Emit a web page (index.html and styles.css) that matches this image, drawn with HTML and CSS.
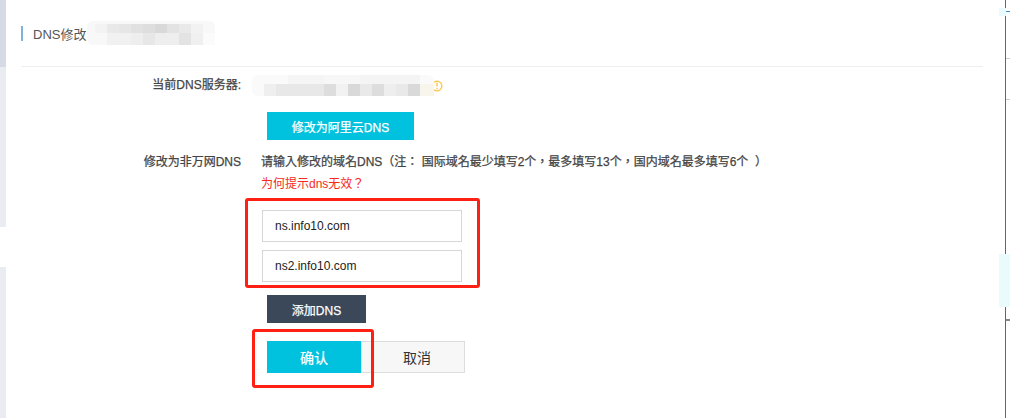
FILE: index.html
```html
<!DOCTYPE html>
<html lang="zh-CN">
<head>
    <meta charset="UTF-8">
    <title>DNS修改</title>
    <link rel="stylesheet" href="styles.css">
</head>
<body>
    <div class="page">
        <aside class="sidebar">
            <div class="side-top"></div>
            <div class="side-mid"></div>
            <div class="side-gap"></div>
            <div class="side-bottom"></div>
        </aside>

        <main class="content">
            <div class="title-bar">
                <h2 class="title">DNS修改</h2>
                <svg class="mosaic" width="128" height="24" viewBox="0 0 128 24">
                    <rect x="0" y="0" width="128" height="24" rx="6" fill="#f8f8f8"/>
                    <rect x="8" y="3" width="12" height="9" fill="#f3f3f3"/>
                    <rect x="20" y="3" width="12" height="9" fill="#e9e9e9"/>
                    <rect x="32" y="3" width="12" height="9" fill="#e6e6e6"/>
                    <rect x="44" y="3" width="12" height="9" fill="#e1e1e1"/>
                    <rect x="56" y="3" width="12" height="9" fill="#dedede"/>
                    <rect x="68" y="3" width="12" height="9" fill="#d9d9d9"/>
                    <rect x="80" y="3" width="12" height="9" fill="#e3e3e3"/>
                    <rect x="92" y="3" width="12" height="9" fill="#e9e9e9"/>
                    <rect x="104" y="3" width="12" height="9" fill="#f2f2f2"/>
                    <rect x="20" y="12" width="12" height="12" fill="#f1f1f1"/>
                    <rect x="32" y="12" width="12" height="12" fill="#f1f1f1"/>
                    <rect x="44" y="12" width="12" height="12" fill="#eeeeee"/>
                    <rect x="56" y="12" width="12" height="12" fill="#e7e7e7"/>
                    <rect x="68" y="12" width="12" height="12" fill="#eeeeee"/>
                    <rect x="80" y="12" width="12" height="12" fill="#eeeeee"/>
                    <rect x="92" y="12" width="12" height="12" fill="#e3e3e3"/>
                    <rect x="104" y="12" width="12" height="12" fill="#f0f0f0"/>
                    <rect x="116" y="12" width="12" height="12" fill="#fbfbfb"/>
                </svg>
            </div>

            <div class="form-row row-current">
                <label class="form-label">当前DNS服务器:</label>
                <div class="current-value">
                    <svg class="mosaic" width="182" height="21" viewBox="0 0 182 21">
                        <rect x="0" y="0" width="182" height="21" rx="6" fill="#fafafa"/>
                        <rect x="36" y="0" width="36" height="9" fill="#f5f5f5"/>
                        <rect x="72" y="0" width="36" height="9" fill="#f7f7f7"/>
                        <rect x="108" y="0" width="60" height="9" fill="#f4f4f4"/>
                        <rect x="12" y="9" width="12" height="12" fill="#efefef"/>
                        <rect x="24" y="9" width="48" height="12" fill="#e8e8e8"/>
                        <rect x="72" y="9" width="12" height="12" fill="#dddddd"/>
                        <rect x="84" y="9" width="12" height="12" fill="#f2f2f2"/>
                        <rect x="96" y="9" width="12" height="12" fill="#d9d9d9"/>
                        <rect x="108" y="9" width="12" height="12" fill="#e9e9e9"/>
                        <rect x="120" y="9" width="12" height="12" fill="#dddddd"/>
                        <rect x="132" y="9" width="12" height="12" fill="#eeeeee"/>
                        <rect x="144" y="9" width="12" height="12" fill="#e9e9e9"/>
                        <rect x="156" y="9" width="12" height="12" fill="#d9d9d9"/>
                        <rect x="168" y="9" width="14" height="12" fill="#f8f5ec"/>
                    </svg>
                    <svg class="tip-icon" width="12" height="12" viewBox="0 0 12 12">
                        <circle cx="6" cy="6" r="4.8" fill="none" stroke="#fcc858" stroke-width="1.5"/>
                        <path d="M6 2.8v3.8M6 7.8v1.3" stroke="#fcc858" stroke-width="1.5"/>
                    </svg>
                </div>
            </div>

            <div class="form-row row-aliyun">
                <div></div>
                <div><button class="btn btn-primary btn-aliyun">修改为阿里云DNS</button></div>
            </div>

            <div class="form-row row-custom">
                <label class="form-label">修改为非万网DNS</label>
                <div class="custom-col">
                    <p class="hint" lang="zh-TW">请输入修改的域名DNS（注： 国际域名最少填写2个，最多填写13个，国内域名最多填写6个 &nbsp;）</p>
                    <a class="why-link" lang="zh-TW">为何提示dns无效？</a>

                    <div class="dns-inputs">
                        <input class="dns-input" type="text" value="ns.info10.com">
                        <input class="dns-input" type="text" value="ns2.info10.com">
                        <div class="mark mark-inputs"></div>
                    </div>

                    <button class="btn btn-dark">添加DNS</button>

                    <div class="actions">
                        <div class="confirm-wrap">
                            <button class="btn btn-primary btn-confirm">确认</button>
                            <div class="mark mark-confirm"></div>
                        </div>
                        <button class="btn btn-cancel">取消</button>
                    </div>
                </div>
            </div>
        </main>

        <aside class="edge">
            <div class="glow glow-top"></div>
            <div class="glow glow-bottom"></div>
            <div class="tick tick-blue"></div>
            <div class="tick tick-second"></div>
            <div class="tick tick-third"></div>
            <div class="tick tick-last"></div>
        </aside>
    </div>
</body>
</html>
```

FILE: styles.css
```css
* {
    margin: 0;
    padding: 0;
    box-sizing: border-box;
}
body {
    background-color: #fff;
    color: #444;
    font-family: "Liberation Sans", "Noto Sans CJK SC", sans-serif;
    font-size: 12px;
}
.page {
    display: flex;
    width: 1010px;
    height: 418px;
    overflow: hidden;
}

.sidebar {
    width: 6px;
    flex-shrink: 0;
}
.side-top {
    height: 67px;
    background-color: #d5dae4;
}
.side-mid {
    height: 160px;
    background-color: #e9ecf1;
}
.side-gap {
    height: 40px;
}
.side-bottom {
    height: 151px;
    background-color: #e9ecf1;
}

.content {
    flex: 1;
    padding: 0 22px 0 15px;
}
.title-bar {
    display: flex;
    align-items: center;
    height: 67px;
    border-bottom: 1px solid #eee;
}
.title {
    height: 15px;
    padding-left: 10px;
    border-left: 2px solid #7fb2dc;
    color: #555;
    font-size: 13px;
    font-weight: normal;
    line-height: 17px;
}
.title-bar .mosaic {
    margin-left: 1px;
}

.form-row {
    display: grid;
    grid-template-columns: 220px 1fr;
    column-gap: 20px;
}
.form-label {
    color: #444;
    -webkit-text-stroke: 0.25px #444;
    text-align: right;
}

.row-current {
    margin-top: 8px;
    height: 21px;
}
.row-current .form-label {
    line-height: 20px;
}
.current-value {
    display: flex;
    align-items: center;
    margin-left: -9px;
}
.mosaic {
    position: relative;
    z-index: 1;
    display: block;
    flex-shrink: 0;
}
.tip-icon {
    margin-left: -3px;
}

.row-aliyun {
    margin-top: 16px;
}
.btn {
    display: block;
    height: 28px;
    border: none;
    font-family: inherit;
    font-size: 12px;
    -webkit-text-stroke: 0.25px #fff;
}
.btn-primary {
    background-color: #00c1de;
    color: #fff;
}
.btn-aliyun {
    width: 147px;
    margin-left: 6px;
}
.btn-dark {
    width: 99px;
    margin: 13px 0 0 6px;
    background-color: #3a4859;
    color: #fff;
}

.row-custom {
    margin-top: 12px;
}
.row-custom .form-label {
    line-height: 20px;
}
.hint {
    color: #444;
    -webkit-text-stroke: 0.25px #444;
    font-family: "Liberation Sans", "Noto Sans CJK TC", sans-serif;
    line-height: 20px;
    white-space: nowrap;
}
.why-link {
    display: block;
    margin-top: 2px;
    color: #f52a1c;
    font-family: "Liberation Sans", "Noto Sans CJK TC", sans-serif;
    line-height: 20px;
}

.dns-inputs {
    position: relative;
    display: flex;
    flex-direction: column;
    gap: 8px;
    width: 200px;
    margin: 16px 0 0 1px;
}
.dns-input {
    width: 200px;
    height: 32px;
    padding: 0 12px;
    border: 1px solid #d7d7d7;
    color: #222;
    font-family: inherit;
    font-size: 12px;
}

/* red annotations drawn over the form */
.mark {
    position: absolute;
    z-index: 2;
    border: 3px solid #ff2014;
    border-radius: 3px;
}
.mark-inputs {
    top: -12px;
    right: -18px;
    bottom: -6px;
    left: -17px;
}
.mark-confirm {
    top: -12px;
    right: -13px;
    bottom: -15px;
    left: -15px;
}

.actions {
    display: flex;
    margin: 18px 0 0 6px;
}
.confirm-wrap {
    position: relative;
}
.btn-confirm {
    width: 94px;
    height: 32px;
    font-size: 14px;
}
.btn-cancel {
    width: 104px;
    height: 32px;
    background-color: #f7f7f7;
    border: 1px solid #ddd;
    padding-left: 8px;
    color: #333;
    font-size: 14px;
    -webkit-text-stroke: 0;
}

.edge {
    position: relative;
    width: 5px;
    flex-shrink: 0;
    border-left: 1px solid #666;
}
.tick {
    height: 1px;
    background-color: #ccc;
}
.tick-blue {
    margin-top: 11px;
    background-color: #2b8fd8;
}
.tick-second {
    margin-top: 46px;
}
.tick-third {
    margin-top: 40px;
}
.tick-last {
    margin-top: 219px;
    height: 2px;
    background-color: #888;
}
.glow {
    position: absolute;
    background-color: #eafbfd;
}
.glow-top {
    top: 8px;
    left: -7px;
    width: 7px;
    height: 8px;
}
.glow-bottom {
    top: 254px;
    left: -7px;
    width: 12px;
    height: 53px;
}
```
